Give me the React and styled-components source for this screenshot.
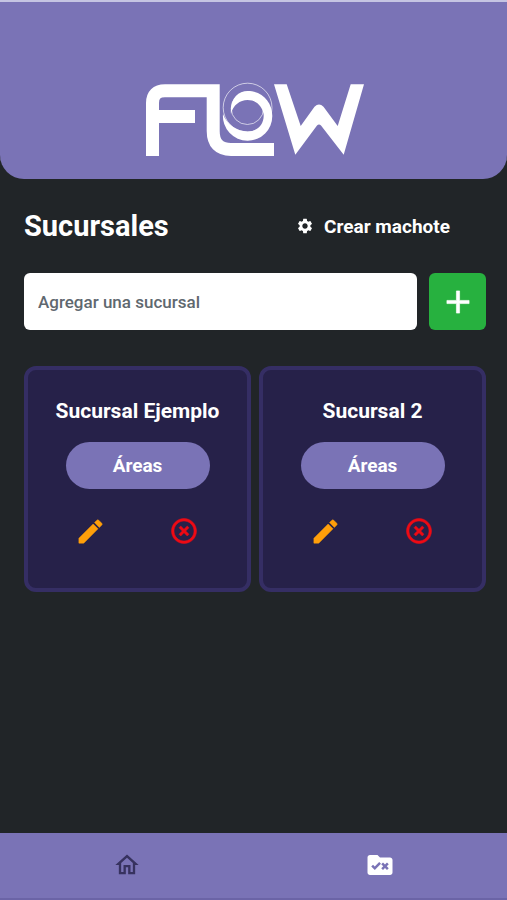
import React, { useState } from 'react';
import styled, { createGlobalStyle } from 'styled-components';
import {
  MdAdd,
  MdEdit,
  MdHighlightOff,
  MdOutlineHome,
  MdRuleFolder,
  MdSettings,
} from 'react-icons/md';

const GlobalStyle = createGlobalStyle`
  * {
    box-sizing: border-box;
  }

  body {
    margin: 0;
    background: #212529;
    color: #fff;
    font-family: Roboto, sans-serif;
  }

  button, input {
    font-family: inherit;
  }

  button {
    border: none;
    padding: 0;
    cursor: pointer;
  }
`

const Page = styled.div`
  display: flex;
  flex-direction: column;
  min-height: 100vh;
  background: #212528;
`

const Header = styled.header`
  display: flex;
  justify-content: center;
  padding: 80px 0 21px;
  border-radius: 0 0 24px 24px;
  background: #7a73b6;
  box-shadow: inset 0 2px #c5c4e2;
`

const Logo = styled.svg`
  display: block;
  width: 220px;
  height: 78px;
`

const Main = styled.main`
  flex: 1;
  padding: 24px 21px 24px 24px;
`

const TitleRow = styled.div`
  display: flex;
  align-items: center;
  justify-content: space-between;
  height: 46px;
`

const Title = styled.h1`
  margin: 0;
  font-size: 29px;
  font-weight: 700;
`

const TemplateBtn = styled.button`
  display: flex;
  align-items: center;
  justify-content: center;
  gap: 10px;
  width: 226px;
  height: 46px;
  background: transparent;
  color: #fff;
  font-size: 19px;
  font-weight: 700;
`

const AddForm = styled.form`
  display: flex;
  gap: 12px;
  margin-top: 24px;
`

const NameInput = styled.input`
  flex: 1;
  min-width: 0;
  height: 57px;
  padding: 0 14px;
  border: none;
  border-radius: 6px;
  background: #fff;
  color: #212529;
  font-size: 17px;
  font-weight: 500;

  &::placeholder {
    color: #5f686f;
    opacity: 1;
  }
`

const AddBtn = styled.button`
  display: flex;
  align-items: center;
  justify-content: center;
  width: 57px;
  height: 57px;
  border-radius: 6px;
  background: #27b13f;
  color: #fff;

  path:not([fill="none"]) {
    stroke-width: 0.4px;
  }
`

const CardGrid = styled.div`
  display: grid;
  grid-template-columns: repeat(2, 1fr);
  gap: 8px;
  margin-top: 36px;
`

const Card = styled.article`
  display: flex;
  flex-direction: column;
  align-items: center;
  min-height: 226px;
  padding: 28px 16px;
  border: 4px solid #352e64;
  border-radius: 12px;
  background: #262149;
`

const CardTitle = styled.h2`
  margin: 0;
  font-size: 21px;
  line-height: 26px;
  font-weight: 700;
`

const AreasBtn = styled.button`
  width: 144px;
  height: 47px;
  margin-top: 18px;
  border-radius: 24px;
  background: #7a73b6;
  color: #fff;
  font-size: 19px;
  font-weight: 700;
`

const CardActions = styled.div`
  display: flex;
  justify-content: space-around;
  width: 100%;
  margin-top: 26px;
`

const IconBtn = styled.button`
  display: flex;
  align-items: center;
  justify-content: center;
  width: 32px;
  height: 32px;
  background: transparent;
  color: ${props => props.$color};

  path:not([fill="none"]) {
    stroke-width: 0.4px;
    stroke-linejoin: round;
  }
`

const NavBar = styled.nav`
  display: flex;
  height: 67px;
  padding-bottom: 2px;
  background: #7a73b6;
  border-bottom: 2px solid #6b64a6;
`

const NavLink = styled.a`
  flex: 1;
  display: flex;
  align-items: center;
  justify-content: center;
  color: ${props => (props.$active ? '#fff' : '#37325f')};
`

const FlowLogo = () => (
  <Logo viewBox="144 80 220 78" role="img" aria-label="Flow">
    <g fill="none" stroke="#fff" strokeWidth="13">
      <path d="M152.5 156V103Q152.5 90.7 165 90.7H213.2V131Q213.2 149.4 231 149.4H274" />
      <path d="M155 116.5H195" />
    </g>
    <g fill="none" stroke="#fff" strokeOpacity="0.7" strokeWidth="0.9">
      <circle cx="247.6" cy="107.6" r="24.4" />
      <circle cx="247.4" cy="108.3" r="16.2" />
    </g>
    <path
      fill="#fff"
      d="M231 114C229.5 99 238 91 247.7 91C262 91 272.3 102 272.3 116A24.6 24.6 0 0 1 247.7 140.7A24.6 24.6 0 0 1 223 114C227 125 237 131.4 247.7 131.4C258 131.4 264.5 124 263.6 114C262 106 256 100 247.5 100C240 100 233 105 231 114Z"
    />
    <path
      fill="#fff"
      d="M274 84.3H286.7L300.7 126L314.5 106.8Q319 102 323.5 106.8L337.7 126L350.7 84.3H364L343.7 154.8L321 125.5Q319 123.5 317 125.5L295.3 154.8Z"
    />
  </Logo>
)

const BranchCard = ({ branch, onDelete }) => (
  <Card>
    <CardTitle>{branch.name}</CardTitle>
    <AreasBtn type="button">Áreas</AreasBtn>
    <CardActions>
      <IconBtn type="button" $color="#ff9f0a" aria-label="Editar">
        <MdEdit size={31} />
      </IconBtn>
      <IconBtn type="button" $color="#ee0a14" aria-label="Eliminar" onClick={() => onDelete(branch.id)}>
        <MdHighlightOff size={30} />
      </IconBtn>
    </CardActions>
  </Card>
)

export default function App() {
  const [name, setName] = useState('')
  const [branches, setBranches] = useState([
    { id: 1, name: 'Sucursal Ejemplo' },
    { id: 2, name: 'Sucursal 2' },
  ])

  const onSubmit = event => {
    event.preventDefault()
    if (!name.trim()) return
    setBranches([...branches, { id: Date.now(), name: name.trim() }])
    setName('')
  }

  const onDelete = id => {
    setBranches(branches.filter(branch => branch.id !== id))
  }

  return (
    <Page>
      <GlobalStyle />
      <Header>
        <FlowLogo />
      </Header>
      <Main>
        <TitleRow>
          <Title>Sucursales</Title>
          <TemplateBtn type="button">
            <MdSettings size={18} />
            Crear machote
          </TemplateBtn>
        </TitleRow>
        <AddForm onSubmit={onSubmit}>
          <NameInput
            type="text"
            aria-label="Agregar una sucursal"
            placeholder="Agregar una sucursal"
            value={name}
            onChange={event => setName(event.target.value)}
          />
          <AddBtn type="submit" aria-label="Agregar">
            <MdAdd size={38} />
          </AddBtn>
        </AddForm>
        <CardGrid>
          {branches.map(branch => (
            <BranchCard key={branch.id} branch={branch} onDelete={onDelete} />
          ))}
        </CardGrid>
      </Main>
      <NavBar>
        <NavLink href="#inicio" aria-label="Inicio">
          <MdOutlineHome size={28} />
        </NavLink>
        <NavLink href="#sucursales" aria-label="Sucursales" $active>
          <MdRuleFolder size={30} />
        </NavLink>
      </NavBar>
    </Page>
  )
}
